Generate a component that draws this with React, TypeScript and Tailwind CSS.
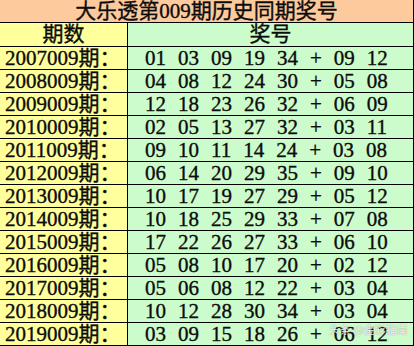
import React from "react";

const rows: [string, string][] = [
  ["2007009", "01 03 09 19 34 + 09 12"],
  ["2008009", "04 08 12 24 30 + 05 08"],
  ["2009009", "12 18 23 26 32 + 06 09"],
  ["2010009", "02 05 13 27 32 + 03 11"],
  ["2011009", "09 10 11 14 24 + 03 08"],
  ["2012009", "06 14 20 29 35 + 09 10"],
  ["2013009", "10 17 19 27 29 + 05 12"],
  ["2014009", "10 18 25 29 33 + 07 08"],
  ["2015009", "17 22 26 27 33 + 06 10"],
  ["2016009", "05 08 10 17 20 + 02 12"],
  ["2017009", "05 06 08 12 22 + 03 04"],
  ["2018009", "10 12 28 30 34 + 03 04"],
  ["2019009", "03 09 15 18 26 + 06 12"],
];

const font = { fontFamily: '"Liberation Serif", "Noto Sans CJK SC", serif' };

export default function App() {
  return (
    <div
      className="relative w-[414px] h-[346px] overflow-hidden bg-white text-[#0c0c0c] [-webkit-text-stroke:0.35px_#0c0c0c]"
      style={font}
    >
      <div className="flex h-[23px] items-center justify-center border-b border-r border-black bg-[#fcca9c] text-[21px] leading-none">
        大乐透第009期历史同期奖号
      </div>
      <div className="flex h-[24px] border-b border-r border-black text-[21px] leading-none">
        <div className="flex w-[128px] items-center justify-center border-r border-black bg-[#ffff9c]">
          期数
        </div>
        <div className="flex flex-1 items-center justify-center bg-[#ccfccc]">奖号</div>
      </div>
      {rows.map(([p, n]) => (
        <div
          key={p}
          className="flex h-[23px] border-b border-r border-black text-[21px] leading-none"
        >
          <div className="flex w-[128px] items-center border-r border-black bg-[#ffff9c] pl-[5px] whitespace-nowrap">
            {p}期：
          </div>
          <div className="flex flex-1 items-center bg-[#ccfccc] pl-[17px] whitespace-pre [word-spacing:6.75px]">
            {n}
          </div>
        </div>
      ))}
      <div
        className="absolute left-[329px] top-[324px] whitespace-nowrap text-[11px] leading-none text-white/90 [-webkit-text-stroke:0px] [text-shadow:0_0_1px_rgba(0,0,0,0.5)]"
        style={{ fontFamily: '"Noto Sans CJK SC", sans-serif' }}
      >
        头条 @金彩指南
      </div>
    </div>
  );
}
